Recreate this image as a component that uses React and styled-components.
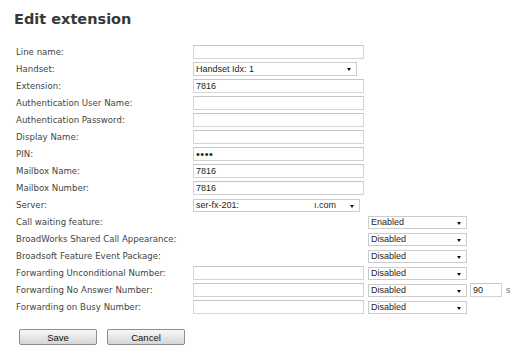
import React from "react";
import styled, { createGlobalStyle } from "styled-components";

const GlobalStyle = createGlobalStyle`
  html, body { margin: 0; padding: 0; background: #fff; }
  body { font-family: "DejaVu Sans", Verdana, sans-serif; }
`;

const Page = styled.div`
  box-sizing: border-box;
  width: 521px;
  padding: 10px 14px;
`;

const Title = styled.h1`
  margin: 0 0 15px;
  font-family: "DejaVu Sans", Verdana, sans-serif;
  font-size: 14.5px;
  line-height: 18px;
  font-weight: bold;
  color: #383838;
`;

const Form = styled.form`
  display: flex;
  flex-direction: column;
  padding-left: 2px;
  margin: 0;
`;

const Row = styled.div`
  display: grid;
  grid-template-columns: 177px 175px 102px 36px auto;
  height: 17px;
  align-items: center;
`;

const Label = styled.label`
  grid-column: 1;
  font-size: 8.6px;
  line-height: 17px;
  padding-top: 1px;
  color: #444;
  white-space: nowrap;
`;

const TextInput = styled.input`
  grid-column: ${(p) => p.$col || 2};
  display: block;
  box-sizing: border-box;
  width: ${(p) => p.$w || 171}px;
  height: 14px;
  margin: 0;
  padding: 0 2px;
  border: 1px solid #d4d4d4;
  border-top-color: #c6c6c6;
  background: #fff;
  font-family: "Liberation Sans", Arial, sans-serif;
  font-size: ${(p) => (p.type === "password" ? 11 : 9)}px;
  letter-spacing: ${(p) => (p.type === "password" ? "0.5px" : "0")};
  color: #1e1e1e;
  outline: none;
`;

const SelectWrap = styled.div`
  grid-column: ${(p) => p.$col};
  position: relative;
  width: ${(p) => p.$w}px;
  height: ${(p) => p.$h}px;
`;

const Select = styled.select`
  appearance: none;
  -webkit-appearance: none;
  display: block;
  box-sizing: border-box;
  width: ${(p) => p.$w}px;
  height: ${(p) => p.$h}px;
  min-height: 0;
  margin: 0;
  padding: 0 0 0 2px;
  border: 1px solid #cccccc;
  border-radius: 0;
  background: #fff;
  font-family: "Liberation Sans", Arial, sans-serif;
  font-size: 9px;
  line-height: ${(p) => p.$h - 2}px;
  color: #1e1e1e;
  outline: none;
`;

const Arrow = styled.span`
  position: absolute;
  right: 6px;
  top: ${(p) => Math.round(p.$h / 2) - 1}px;
  width: 0;
  height: 0;
  border-left: 2.5px solid transparent;
  border-right: 2.5px solid transparent;
  border-top: 3px solid #111;
  pointer-events: none;
`;

const Unit = styled.span`
  grid-column: 5;
  font-family: "Liberation Sans", Arial, sans-serif;
  font-size: 9px;
  color: #777;
`;

const ButtonRow = styled.div`
  display: flex;
  gap: 10px;
  margin-top: 14px;
  padding-left: 5px;
`;

const Button = styled.button`
  box-sizing: border-box;
  width: 78px;
  height: 16px;
  margin: 0;
  padding: 0;
  border: 1px solid #8c8c8c;
  border-radius: 2px;
  background: linear-gradient(#f7f7f7, #d6d6d6);
  font-family: "Liberation Sans", Arial, sans-serif;
  font-size: 9.5px;
  color: #111;
`;

function Dropdown({ col, w, h = 13, value }) {
  return (
    <SelectWrap $col={col} $w={w} $h={h}>
      <Select $w={w} $h={h} defaultValue={value}>
        <option value={value}>{value}</option>
      </Select>
      <Arrow $h={h} />
    </SelectWrap>
  );
}

const SERVER = "ser-fx-201:" + "\u00a0".repeat(30) + "ı.com";

export default function App() {
  return (
    <>
      <GlobalStyle />
      <Page>
        <Title>Edit extension</Title>
        <Form>
          <Row>
            <Label>Line name:</Label>
            <TextInput defaultValue="" />
          </Row>
          <Row>
            <Label>Handset:</Label>
            <Dropdown col={2} w={164} h={14} value="Handset Idx: 1" />
          </Row>
          <Row>
            <Label>Extension:</Label>
            <TextInput defaultValue="7816" />
          </Row>
          <Row>
            <Label>Authentication User Name:</Label>
            <TextInput defaultValue="" />
          </Row>
          <Row>
            <Label>Authentication Password:</Label>
            <TextInput defaultValue="" />
          </Row>
          <Row>
            <Label>Display Name:</Label>
            <TextInput defaultValue="" />
          </Row>
          <Row>
            <Label>PIN:</Label>
            <TextInput type="password" defaultValue="1234" />
          </Row>
          <Row>
            <Label>Mailbox Name:</Label>
            <TextInput defaultValue="7816" />
          </Row>
          <Row>
            <Label>Mailbox Number:</Label>
            <TextInput defaultValue="7816" />
          </Row>
          <Row>
            <Label>Server:</Label>
            <Dropdown col={2} w={167} value={SERVER} />
          </Row>
          <Row>
            <Label>Call waiting feature:</Label>
            <Dropdown col={3} w={99} value="Enabled" />
          </Row>
          <Row>
            <Label>BroadWorks Shared Call Appearance:</Label>
            <Dropdown col={3} w={99} value="Disabled" />
          </Row>
          <Row>
            <Label>Broadsoft Feature Event Package:</Label>
            <Dropdown col={3} w={99} value="Disabled" />
          </Row>
          <Row>
            <Label>Forwarding Unconditional Number:</Label>
            <TextInput defaultValue="" />
            <Dropdown col={3} w={99} value="Disabled" />
          </Row>
          <Row>
            <Label>Forwarding No Answer Number:</Label>
            <TextInput defaultValue="" />
            <Dropdown col={3} w={99} value="Disabled" />
            <TextInput $col={4} $w={32} defaultValue="90" />
            <Unit>s</Unit>
          </Row>
          <Row>
            <Label>Forwarding on Busy Number:</Label>
            <TextInput defaultValue="" />
            <Dropdown col={3} w={99} value="Disabled" />
          </Row>
        </Form>
        <ButtonRow>
          <Button type="button">Save</Button>
          <Button type="button">Cancel</Button>
        </ButtonRow>
      </Page>
    </>
  );
}
